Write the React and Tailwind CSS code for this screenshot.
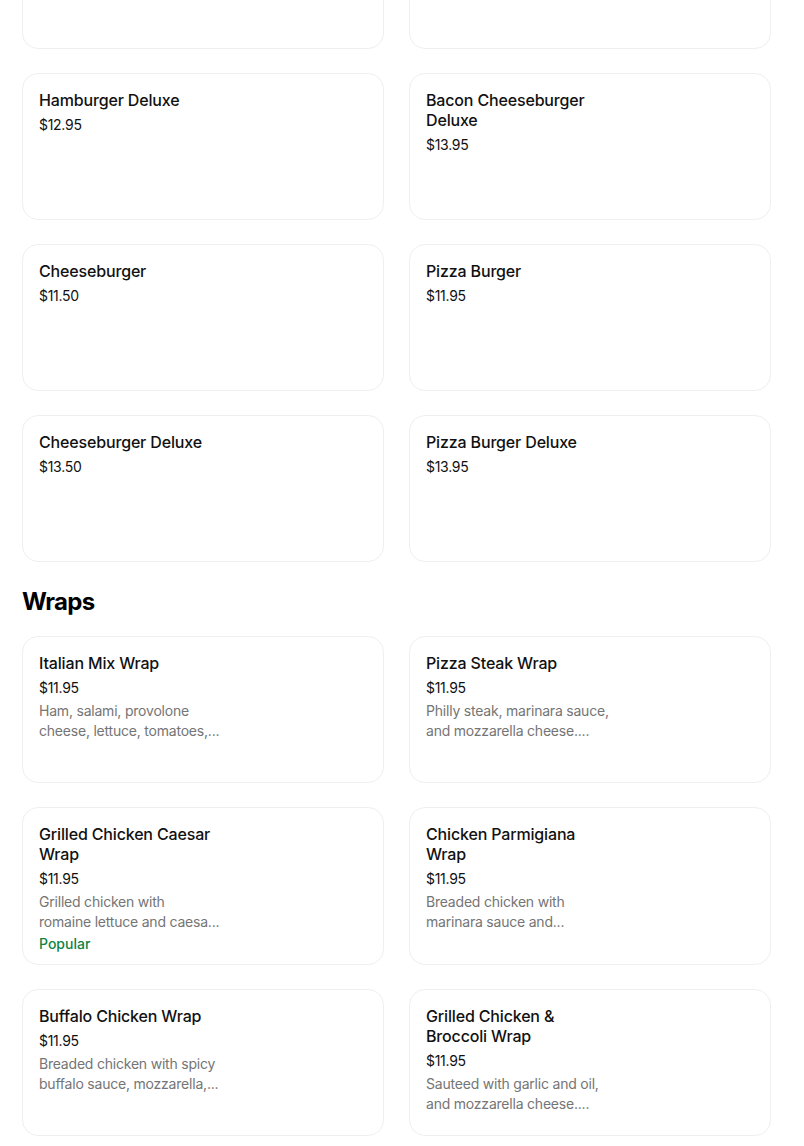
import React from "react";

const burgers = [
  { name: "", price: "" },
  { name: "", price: "" },
  { name: "Hamburger Deluxe", price: "$12.95" },
  { name: "Bacon Cheeseburger Deluxe", price: "$13.95" },
  { name: "Cheeseburger", price: "$11.50" },
  { name: "Pizza Burger", price: "$11.95" },
  { name: "Cheeseburger Deluxe", price: "$13.50" },
  { name: "Pizza Burger Deluxe", price: "$13.95" },
];

const wraps = [
  {
    name: "Italian Mix Wrap",
    price: "$11.95",
    desc: ["Ham, salami, provolone", "cheese, lettuce, tomatoes,..."],
  },
  {
    name: "Pizza Steak Wrap",
    price: "$11.95",
    desc: ["Philly steak, marinara sauce,", "and mozzarella cheese...."],
  },
  {
    name: "Grilled Chicken Caesar Wrap",
    price: "$11.95",
    desc: ["Grilled chicken with", "romaine lettuce and caesa..."],
    popular: true,
  },
  {
    name: "Chicken Parmigiana Wrap",
    price: "$11.95",
    desc: ["Breaded chicken with", "marinara sauce and..."],
  },
  {
    name: "Buffalo Chicken Wrap",
    price: "$11.95",
    desc: ["Breaded chicken with spicy", "buffalo sauce, mozzarella,..."],
  },
  {
    name: "Grilled Chicken & Broccoli Wrap",
    price: "$11.95",
    desc: ["Sauteed with garlic and oil,", "and mozzarella cheese...."],
  },
];

const ItemCard = ({ item }) => (
  <div className="min-h-[147px] rounded-2xl border border-[#efefef] bg-white px-4 pt-4 pb-[10px]">
    <div className="w-[186px]">
      {item.name && (
        <h3 className="text-[16px] leading-5 font-medium tracking-[-0.01em] text-[#111111]">
          {item.name}
        </h3>
      )}
      {item.price && (
        <div className="mt-[5px] text-[14px] leading-5 tracking-[-0.02em] text-[#111111]">
          {item.price}
        </div>
      )}
      {item.desc && (
        <p className="mt-[3px] text-[14px] leading-5 tracking-[-0.015em] text-[#757575]">
          {item.desc.map((line) => (
            <span key={line} className="block whitespace-nowrap">
              {line}
            </span>
          ))}
        </p>
      )}
      {item.popular && (
        <div className="mt-[2px] text-[14px] leading-5 font-medium text-[#0e8345]">
          Popular
        </div>
      )}
    </div>
  </div>
);

export default function App() {
  return (
    <div
      className="h-[1146px] w-[804px] overflow-hidden bg-white"
      style={{ fontFamily: "Inter, 'Noto Sans', sans-serif" }}
    >
      <div className="-mt-[98px] ml-[22px] w-[749px]">
        <div className="grid grid-cols-2 gap-x-[25px] gap-y-6">
          {burgers.map((item, i) => (
            <ItemCard key={i} item={item} />
          ))}
        </div>

        <h2 className="mt-6 mb-[18px] text-[24px] leading-8 font-bold tracking-[-0.03em] text-black">
          Wraps
        </h2>

        <div className="grid grid-cols-2 gap-x-[25px] gap-y-6">
          {wraps.map((item) => (
            <ItemCard key={item.name} item={item} />
          ))}
        </div>
      </div>
    </div>
  );
}
